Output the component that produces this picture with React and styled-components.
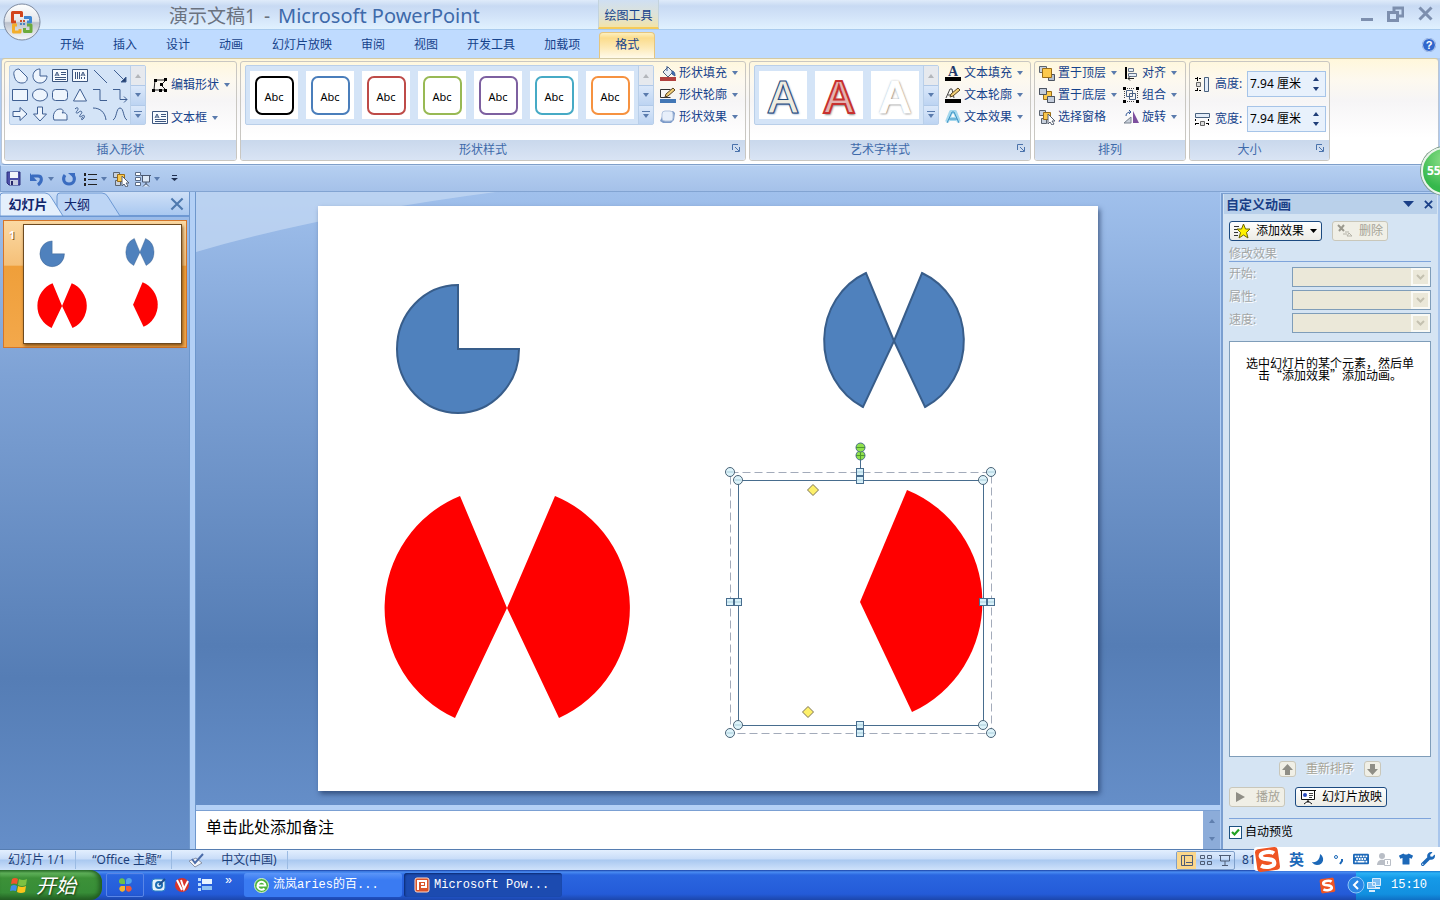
import React from "react"
import styled, { createGlobalStyle, css } from "styled-components"
import { FaMoon, FaTshirt, FaWrench, FaKeyboard } from "react-icons/fa"

const GlobalStyle = createGlobalStyle`
    * { box-sizing: border-box; }
    body {
        margin: 0;
        overflow: hidden;
        font-family: "Noto Sans", "Noto Sans CJK SC", sans-serif;
        font-size: 12px;
        line-height: 16px;
        color: #15428b;
    }
    button, input, select {
        font: inherit;
        color: inherit;
        margin: 0;
    }
    button {
        border: none;
        background: none;
        padding: 0;
        white-space: nowrap;
    }
    svg { display: block; flex-shrink: 0; }`

const Page = styled.div`
    position: relative;
    display: flex;
    flex-direction: column;
    height: 100vh;
    overflow: hidden;
    background: #b0ccf2;`

/* title bar */

const TitleBar = styled.header`
    display: flex;
    flex-shrink: 0;
    height: 30px;
    padding-left: 169px;
    border-bottom: 1px solid #a9cbee;
    background: linear-gradient(#dfebfa 0, #c8daf3 6px, #d2e3f8 16px, #e0f1ff 100%);`

const Orb = styled.button`
    position: absolute;
    left: 3px;
    top: 3px;
    z-index: 2;`

const Title = styled.h1`
    display: flex;
    gap: 8px;
    margin: 0;
    width: 429px;
    font-size: 19px;
    font-weight: 400;
    line-height: 32px;
    color: #6a727f;
    white-space: nowrap;`

const AppName = styled.span`
    font-size: 20px;
    color: #3e6aaa;`

const ContextHeader = styled.div`
    width: 61px;
    padding-top: 8px;
    text-align: center;
    border: solid #c3d3dd;
    border-width: 0 1px;
    border-bottom: 2px solid #f5cb5a;
    background: linear-gradient(#cfdff3, #dfe3d4 60%, #f3e3a8);`

const WindowButtons = styled.div`
    display: flex;
    align-items: center;
    gap: 14px;
    margin-left: auto;
    padding: 0 7px 2px 0;`

/* tab strip */

const TabStrip = styled.nav`
    display: flex;
    flex-shrink: 0;
    height: 28px;
    padding: 2px 4px 0 46px;
    gap: 1px;
    background: #bfdbff;`

const Tab = styled.button`
    padding: 0 14px;
    ${({ $active }) => $active && css`
        margin-left: 4px;
        padding: 0 15px 2px;
        border: 1px solid #e5c57e;
        border-bottom: none;
        border-radius: 4px 4px 0 0;
        background: linear-gradient(#fdf0c0 0, #fbdc8c 5px, #fdeab8 60%, #fffaea);
    `}`

const HelpButton = styled.button`
    margin-left: auto;`

/* ribbon */

const Ribbon = styled.section`
    display: flex;
    flex-shrink: 0;
    gap: 3px;
    height: 107px;
    margin: 0 1px;
    padding: 2px 2px 3px;
    border: 1px solid #b9c5d5;
    border-top-color: #d3c9a4;
    border-bottom-color: #7f9fc9;
    border-radius: 4px;
    background: linear-gradient(#fff7db 0, #fdf9ef 20%, #f6f5f6 40%, #ffffff 75%);`

const Group = styled.section`
    position: relative;
    display: flex;
    flex-direction: column;
    width: ${({ $width }) => $width}px;
    border: 1px solid #c9c7c2;
    border-radius: 3px;
    overflow: hidden;`

const GroupBody = styled.div`
    flex: 1;
    display: flex;
    align-items: flex-start;
    gap: 6px;
    padding: 0 4px;`

const GroupLabel = styled.h2`
    margin: 0;
    height: 20px;
    padding: 2px ${({ $launcher }) => $launcher ? 20 : 0}px 0 0;
    font-size: 12px;
    font-weight: 400;
    text-align: center;
    color: #3e6aaa;
    background: linear-gradient(#c9d8ec, #d9e4f4);`

const Launcher = styled.button`
    position: absolute;
    right: 5px;
    bottom: 8px;`

const Gallery = styled.div`
    display: flex;
    margin-top: 3px;
    height: 60px;
    border: 1px solid #b9cfe9;
    border-radius: 2px;
    background: #d4e4f7;`

const ShapeGrid = styled.div`
    display: grid;
    grid-template-columns: repeat(6, 20px);
    grid-template-rows: repeat(3, 19px);`

const ShapeButton = styled.button`
    display: grid;
    place-items: center;`

const StyleCells = styled.div`
    display: flex;
    gap: 8px;
    padding: 5px 4px;`

const StyleCell = styled.button`
    display: grid;
    place-items: center;
    width: 48px;
    height: 48px;
    background: #fff;`

const AbcBox = styled.span`
    width: 39px;
    height: 39px;
    border: 2px solid ${({ $color }) => $color};
    border-radius: 7px;
    font-size: 11px;
    line-height: 38px;
    color: #000;`

const WordArt = styled.span`
    font-family: "Open Sans", sans-serif;
    font-weight: 600;
    font-size: 46px;
    line-height: 48px;
    color: ${({ $fill }) => $fill};
    -webkit-text-stroke: ${({ $weight }) => $weight}px ${({ $stroke }) => $stroke};
    text-shadow: ${({ $shadow }) => $shadow};`

const ScrollColumn = styled.div`
    display: grid;
    grid-template-rows: repeat(3, 1fr);
    width: 15px;
    border-left: 1px solid #b9cfe9;`

const ScrollButton = styled.button`
    display: grid;
    place-items: center;
    background: ${({ $off }) => $off ? "#e6e9ee" : "linear-gradient(#dbe8fa, #bdd4f2)"};
    & + & { border-top: 1px solid #b1c9e8; }`

const Column = styled.div`
    display: flex;
    flex-direction: column;
    align-items: flex-start;
    gap: ${({ $gap }) => $gap || 0}px;
    padding-top: ${({ $top }) => $top || 0}px;`

const RibbonButton = styled.button`
    display: flex;
    align-items: center;
    gap: 3px;
    height: 22px;`

const ArrowWrap = styled.span`
    padding-left: 2px;`

const SizeRow = styled.div`
    display: flex;
    align-items: center;
    gap: 5px;
    height: 26px;`

const SizeLabel = styled.label`
    width: 27px;
    white-space: nowrap;`

const SpinBox = styled.div`
    display: flex;
    width: 79px;
    height: 26px;
    border: 1px solid #a6c4e8;
    background: #e8f1fc;`

const SpinInput = styled.input`
    flex: 1;
    min-width: 0;
    padding: 0 2px;
    border: none;
    background: transparent;
    color: #000;`

const SpinArrows = styled.div`
    display: flex;
    flex-direction: column;
    justify-content: space-evenly;
    width: 12px;`

/* quick access bar */

const QuickBar = styled.div`
    display: flex;
    flex-shrink: 0;
    align-items: center;
    height: 27px;
    padding-left: 5px;
    gap: 4px;
    border: 1px solid #82a4d2;
    border-top-color: #c7dcf7;
    background: linear-gradient(#b5cff1, #a5c1e9);`

const QuickButton = styled.button`
    display: flex;
    align-items: center;
    gap: 3px;
    margin-right: ${({ $after }) => $after || 0}px;`

/* work area */

const Workspace = styled.main`
    flex: 1;
    display: flex;
    min-height: 0;
    background: #b3d0f6;`

const backdrop = css`
    background: linear-gradient(#a0c0ec 0, #7ea2d5 28%, #557db5 74%, #658ec8 100%);`

const SlidePane = styled.aside`
    display: flex;
    flex-direction: column;
    width: 190px;
    flex-shrink: 0;
    border-right: 1px solid #6e97cc;
    ${backdrop}`

const PaneTabs = styled.div`
    position: relative;
    display: flex;
    height: 25px;
    border-bottom: 2px solid #6d98d3;
    background: linear-gradient(#cfe0f7, #a9c8f0);`

const PaneTabArt = styled.svg`
    position: absolute;
    left: 0;
    top: 0;`

const PaneTab = styled.button`
    position: relative;
    width: 56px;
    font-size: 13px;
    font-weight: ${({ $active }) => $active ? 700 : 400};
    text-align: center;
    color: #10246b;
    & + & { width: 42px; }`

const PaneClose = styled.button`
    margin-left: auto;
    padding-right: 5px;`

const Thumb = styled.button`
    display: flex;
    align-items: flex-start;
    margin: 3px 2px 0 3px;
    padding: 3px 4px 3px 3px;
    gap: 6px;
    border: 1px solid #d5762a;
    background: linear-gradient(#fbd9a3 0, #f5c078 35%, #ef9f3a 36%, #f3a84b 100%);`

const ThumbNumber = styled.span`
    width: 10px;
    padding-top: 4px;
    font-size: 11px;
    font-weight: 700;
    line-height: 13px;
    color: #fff;
    text-shadow: 1px 1px #8a5a20;`

const ThumbSlide = styled.span`
    flex: 1;
    border: 1px solid #6d4a20;
    background: #fff;
    box-shadow: 1px 2px 3px rgba(90, 45, 0, 0.7);
    svg { width: 100%; height: auto; }`

const Center = styled.div`
    flex: 1;
    display: flex;
    flex-direction: column;
    min-width: 0;
    margin-left: 5px;
    border-left: 1px solid #6e97cc;`

const Stage = styled.div`
    position: relative;
    flex: 1;
    min-height: 0;
    display: flex;
    justify-content: center;
    align-items: flex-start;
    padding: 14px 20px;
    ${backdrop}`

const Swoosh = styled.svg`
    position: absolute;
    left: 0;
    top: 0;`

const Slide = styled.div`
    position: relative;
    height: 100%;
    aspect-ratio: 4 / 3;
    background: #fff;
    box-shadow: 2px 3px 5px rgba(20, 40, 80, 0.6);
    svg { width: 100%; height: 100%; }`

const Notes = styled.div`
    display: flex;
    height: 39px;
    flex-shrink: 0;
    margin-top: 5px;
    border-top: 1px solid #7ba0d3;`

const NotesInput = styled.input`
    flex: 1;
    min-width: 0;
    border: none;
    padding: 0 10px 6px;
    background: #fff;
    font-size: 16px;
    color: #000;
    &::placeholder { color: #000; opacity: 1; }`

const NotesScroll = styled.div`
    display: flex;
    flex-direction: column;
    justify-content: space-between;
    align-items: center;
    width: 18px;
    padding: 8px 0;
    border-left: 1px solid #fff;
    background: #8cacd9;`

/* custom animation pane */

const TaskPane = styled.aside`
    display: flex;
    flex-direction: column;
    width: 219px;
    flex-shrink: 0;
    margin: 1px 0 0 1px;
    border-left: 2px solid #7b9fd0;
    border-right: 2px solid #a9c6ec;
    border-top: 1px solid #7b9fd0;
    background: #d5e4f3;
    color: #000;`

const TaskHeader = styled.header`
    display: flex;
    align-items: center;
    height: 20px;
    margin: 0 1px;
    gap: 10px;
    padding: 0 4px 0 2px;
    background: #b9d0ea;
    color: #1a3f87;
    h2 {
        flex: 1;
        margin: 0;
        font-size: 13px;
        font-weight: 700;
    }`

const TaskBody = styled.div`
    flex: 1;
    display: flex;
    flex-direction: column;
    padding: 7px 7px 0 6px;`

const TaskRow = styled.div`
    display: flex;
    align-items: center;
    justify-content: ${({ $center }) => $center ? "center" : "flex-start"};
    gap: 10px;
    margin-top: ${({ $top }) => $top || 0}px;`

const TaskButton = styled.button`
    display: flex;
    align-items: center;
    justify-content: center;
    gap: 6px;
    height: 20px;
    padding: 0 4px;
    border: 1px solid #1c4a80;
    border-radius: 3px;
    background: linear-gradient(#fff, #ecebe5);
    color: #000;
    &:disabled {
        border-color: #c9c7ba;
        background: #f0efe6;
        color: #a5a397;
    }`

const SmallButton = styled(TaskButton)`
    width: 17px;
    height: 16px;
    padding: 0;`

const SectionTitle = styled.h3`
    margin: 6px 0 5px;
    height: 15px;
    border-bottom: 1px solid #7ea4db;
    font-size: 12px;
    font-weight: 400;
    line-height: 14px;
    color: #a3a6a6;
    text-shadow: 1px 1px #fff;`

const Field = styled.div`
    display: flex;
    justify-content: space-between;
    height: 23px;
    label {
        line-height: 14px;
        color: #a3a6a6;
        text-shadow: 1px 1px #fff;
    }`

const SelectBox = styled.div`
    display: flex;
    position: relative;
    width: 139px;
    height: 20px;
    select {
        flex: 1;
        appearance: none;
        border: 1px solid #7f9db9;
        border-radius: 0;
        background: #ebe8d9;
        opacity: 1;
    }`

const SelectArrow = styled.span`
    position: absolute;
    right: 1px;
    top: 1px;
    bottom: 1px;
    width: 19px;
    display: grid;
    place-items: center;
    border: 2px solid #fafaf5;
    background: #ebe8d9;
    pointer-events: none;`

const EffectList = styled.div`
    flex: 1;
    margin-top: 5px;
    padding: 15px 12px;
    border: 1px solid #7f9db9;
    background: #fff;
    font-family: "Noto Sans CJK SC", sans-serif;
    line-height: 12px;
    text-align: center;`

const Muted = styled.span`
    color: #a5a397;
    text-shadow: 1px 1px #fff;`

const Preview = styled.div`
    display: flex;
    align-items: center;
    gap: 3px;
    margin-top: 11px;
    height: 31px;
    padding-bottom: 4px;
    border-top: 1px solid #7ea4db;
    input {
        appearance: none;
        width: 13px;
        height: 13px;
        border: 1px solid #1c5180;
        background: #fff;
    }
    input:checked {
        background: #fff url("data:image/svg+xml,%3Csvg xmlns='http://www.w3.org/2000/svg' viewBox='0 0 11 11'%3E%3Cpath d='M2 5l2.500 2.500L9 2.500' fill='none' stroke='%2321a121' stroke-width='2.200'/%3E%3C/svg%3E");
    }`

/* status bar and taskbar */

const StatusBar = styled.footer`
    display: flex;
    flex-shrink: 0;
    align-items: center;
    height: 21px;
    padding-left: 8px;
    border-top: 1px solid #567db1;
    background: linear-gradient(#e3effe 0, #c8dcf8 45%, #a9c8f0 50%, #cfe2fb 100%);
    color: #1b3d78;`

const StatusItem = styled.span`
    display: flex;
    align-items: center;
    gap: 17px;
    height: 18px;
    margin-right: ${({ $after }) => $after || 16}px;
    padding-right: 10px;
    border-right: 1px solid #9bbbe3;
    white-space: nowrap;`

const ViewButtons = styled.div`
    display: flex;
    margin-left: auto;
    margin-right: 7px;
    border: 1px solid #7f9fca;
    border-radius: 2px;
    button {
        display: grid;
        place-items: center;
        width: 19px;
        height: 17px;
    }
    button:first-child { background: #fbd78b; }`

const Zoom = styled.span`
    width: 198px;`

const ImeBar = styled.div`
    position: absolute;
    right: 0;
    bottom: 29px;
    display: flex;
    align-items: center;
    gap: 8px;
    height: 24px;
    padding-right: 5px;
    border-radius: 3px 0 0 3px;
    background: #fff;
    color: #1c68b8;
    b { font-size: 15px; }`

const Taskbar = styled.footer`
    display: flex;
    flex-shrink: 0;
    align-items: center;
    height: 30px;
    background: linear-gradient(#1941a5 0, #4a8df2 2px, #2a66e0 5px, #245bd8 80%, #1c46ac 100%);
    color: #fff;
    font-family: "Liberation Mono", "Noto Sans CJK SC", monospace;`

const StartButton = styled.button`
    display: flex;
    align-items: center;
    gap: 7px;
    width: 102px;
    height: 30px;
    padding-left: 9px;
    border-radius: 0 12px 12px 0;
    background: linear-gradient(#2f7a2f 0, #62b35c 3px, #3c9138 8px, #378d37 75%, #245f24 100%);
    box-shadow: inset -3px 0 4px #225c22;
    font-family: "Noto Sans CJK SC", sans-serif;
    font-size: 20px;
    font-style: italic;
    line-height: 26px;
    text-shadow: 1px 1px 2px #16380f;`

const Launch = styled.div`
    display: flex;
    align-items: center;
    gap: 7px;
    width: 142px;
    padding-left: 4px;`

const LaunchMain = styled.button`
    display: grid;
    place-items: center;
    width: 38px;
    height: 24px;
    border: 1px solid #5a86e6;
    border-radius: 2px;`

const More = styled.span`
    padding: 0 0 8px 5px;`

const TaskItem = styled.button`
    display: flex;
    align-items: center;
    gap: 4px;
    width: 158px;
    height: 24px;
    margin-right: 2px;
    padding-left: 10px;
    border-radius: 3px;
    background: ${({ $active }) => $active ? "#1c4bb0" : "linear-gradient(#5c96f8, #3a7bf2 30%)"};
    box-shadow: ${({ $active }) => $active ? "inset 1px 1px 2px #0b2a72" : "none"};`

const Tray = styled.div`
    display: flex;
    align-items: center;
    height: 30px;
    margin-left: auto;`

const TrayInner = styled.div`
    display: flex;
    align-items: center;
    height: 30px;
    gap: 1px;
    margin-left: 20px;
    padding-right: 13px;
    background: linear-gradient(#0c59b9 0, #2bb2f6 3px, #159ae8 8px, #1290e0 80%, #0f6fc4 100%);
    span { margin-left: 8px; }
    svg:first-child { margin-left: -9px; }`

const SpeedBall = styled.div`
    position: absolute;
    right: -29px;
    top: 147px;
    width: 48px;
    height: 48px;
    padding-left: 4px;
    border: 2px solid #e9f5ea;
    border-radius: 50%;
    background: radial-gradient(circle at 50% 25%, #8fe08a, #35b84c 70%);
    box-shadow: 0 0 0 1px #7b9a86;
    color: #fff;
    font-weight: 700;
    line-height: 44px;`

const Ico = ({ w = 16, h = w, box, children, ...rest }) =>
    <svg width={w} height={h} viewBox={box || `0 0 ${w} ${h}`} fill="none" aria-hidden="true" {...rest}>{children}</svg>

const Down = ({ color = "#5a7bad" }) => <Ico w={6} h={4}><path d="M0 0h6L3 4z" fill={color} /></Ico>
const Up = ({ color = "#5a7bad" }) => <Ico w={6} h={4}><path d="M0 4h6L3 0z" fill={color} /></Ico>

const Cross = ({ size = 10, color = "#4e79ae", weight = 2 }) =>
    <Ico w={size} box="0 0 10 10"><path d="M1 1l8 8M9 1L1 9" stroke={color} strokeWidth={weight} /></Ico>

const OrbIcon = () =>
    <Ico w={38} h={38}>
        <defs>
            <linearGradient id="orb" x2="0" y2="1">
                <stop stopColor="#fff" /><stop offset=".48" stopColor="#e2e5ea" />
                <stop offset=".52" stopColor="#bcc2cc" /><stop offset="1" stopColor="#f8fafc" />
            </linearGradient>
        </defs>
        <circle cx="19" cy="19" r="18" fill="url(#orb)" stroke="#7d8aa0" />
        <g strokeWidth="3" strokeLinejoin="round">
            <path d="M13 19H9.500V9.500h9V14" stroke="#d2451c" />
            <path d="M21 14.500h6.500V19H24" stroke="#3f86d2" />
            <path d="M14 22h-3.500v7H17v-3" stroke="#f3ae2c" />
            <path d="M24 22h4v6.500h-6.500V25" stroke="#6cab3c" />
        </g>
        <path d="M17 17h2v2h-2zM20 17h2v2h-2z" fill="#c8502c" />
        <path d="M17 20h2v2h-2zM20 20h2v2h-2z" fill="#4a84c0" />
    </Ico>

const TextBoxIcon = ({ vertical }) =>
    <Ico w={16} h={14}>
        <path d="M.5.5h15v12H.5z" fill="#f7fbff" stroke="#3c567f" />
        {vertical
            ? <path d="M3.500 3v7M5.500 3v7M7.500 3v7M9.500 8v2M12.500 8v2M9 7l2-4 2 4M10 6h2" stroke="#3c567f" />
            : <path d="M9 3.500h5M9 5.500h5M3 8.500h11M3 10.500h11M3 7l2-4 2 4M4 6h2" stroke="#3c567f" />}
    </Ico>

// the eighteen entries of the shape gallery, row by row
const shapes = [
    <path d="M2 7C1 3 4 1 7 1l8 8c1 3-1 6-5 6C5 15 3 12 2 7z" />,
    <path d="M8 1v7h7c0 4-3 7-7 7s-7-3-7-7 3-7 7-7z" />,
    "text",
    "vertical",
    <path d="M2 2l13 13" />,
    <g><path d="M2 2l12 12" /><path d="M14 9v5H9z" fill="#26406e" /></g>,
    <path d="M.5 2.500h15v11H.5z" />,
    <ellipse cx="8" cy="8" rx="7.500" ry="6" />,
    <rect x=".5" y="2.500" width="15" height="11" rx="3" />,
    <path d="M8 2l6.500 12h-13z" />,
    <path d="M1 2.500h7v11h7" fill="none" />,
    <g fill="none"><path d="M1 2.500h7v10h7" /><path d="M12 9.500l3 3-3 3" /></g>,
    <path d="M1 5.500h7v-4l7 6.500-7 6.500v-4H1z" />,
    <path d="M5.500 1v7h-4L8 15l6.500-7h-4V1z" />,
    <path d="M2 14C0 9 3 3 8 3c3 0 4 2 2 4 3-1 5 1 5 3v4z" />,
    <path d="M3 3c3-3 4 0 2 2s0 3 2 1 4 0 2 2-2 4 1 2 3 1 1 3-2-1 0-2" fill="none" />,
    <path d="M1 2c7 0 12 4 13 12" fill="none" />,
    <path d="M1 14C5 12 4 2 8 2s3 10 7 12" fill="none" />,
]

const ShapeGlyph = ({ shape }) => {
    if (typeof shape === "string") { return <TextBoxIcon vertical={shape === "vertical"} /> }
    return <Ico><g fill="#eef5fd" stroke="#3f5f92">{shape}</g></Ico>
}

const Arrange = ({ front }) =>
    <Ico>
        <path d="M.5 1.500h7v6h-7z" fill="#c7d0dc" stroke="#5b6470" />
        <path d="M9.500 9.500h6v6h-6z" fill="#b3bfd0" stroke="#4b5360" />
        {front
            ? <path d="M3.500 3.500h9v9h-9z" fill="#fbc94d" stroke="#9a6d17" />
            : <><path d="M4.500 4.500h8v8h-8z" fill="#fbc94d" stroke="#9a6d17" />
                <path d="M.5 1.500h7v6h-7zM8.500 9.500h7v6h-7z" fill="#c3ccda" stroke="#4b5360" /></>}
    </Ico>

const SelectPaneIcon = () =>
    <Ico>
        <path d="M.5 1.500h6v5h-6zM2.500 9.500h5v5h-5z" fill="#c7d0dc" stroke="#5b6470" />
        <path d="M4.500 3.500h7v7h-7z" fill="#fbc94d" stroke="#9a6d17" />
        <path d="M9 5v10l2-2 2 3 2-1-2-3h3z" fill="#fff" stroke="#555f70" />
    </Ico>

const icons = {
    editShape: <Ico>
        <path d="M3 3h11L9 8l5 5H2z" stroke="#222" />
        <path d="M2 2h3v3H2zM12 1h3v3h-3zM8 6h3v3H8zM0 12h3v3H0zM12 12h3v3h-3zM7 12h3v3H7z" fill="#000" />
    </Ico>,
    textBox: <TextBoxIcon />,
    fill: <Ico>
        <path d="M3 7l5-5 5 5-5 5z" fill="#e9eff6" stroke="#4f6179" />
        <path d="M7 6V1M12 6c2 0 3 2 3 5l-3-2z" stroke="#3d5f97" fill="#3d70b5" />
        <path d="M0 12h16v4H0z" fill="#b2413e" />
    </Ico>,
    outline: <Ico>
        <path d="M.5 2.500h10M.5 2.500v8h10" stroke="#333" />
        <path d="M5 10l1-3 7-6 2 2-7 6z" fill="#f2cf77" stroke="#5b4522" />
        <path d="M0 12h16v4H0z" fill="#4277b6" />
    </Ico>,
    effect: <Ico>
        <path d="M3 5l3-3h7l2 2-1 7-3 3H3l-3-2z" fill="#7d9bc9" />
        <rect x="2" y="2" width="11" height="10" rx="3" fill="#e7effa" stroke="#b3c5df" />
    </Ico>,
    textFill: <Ico>
        <text x="3" y="11" fontSize="14" fontWeight="700" fontFamily="Liberation Serif, serif" fill="#22386b">A</text>
        <path d="M0 12h16v4H0z" fill="#000" />
    </Ico>,
    textOutline: <Ico>
        <path d="M1 11L5 2h2l2 9M3 8h5" stroke="#444" />
        <path d="M5 10l1-3 7-6 2 2-7 6z" fill="#f2cf77" stroke="#5b4522" />
        <path d="M0 12h16v4H0z" fill="#000" />
    </Ico>,
    textEffect: <Ico>
        <path d="M2 13L6 3h4l4 10M5 10h6" stroke="#a5d8ee" strokeWidth="4" strokeLinejoin="round" />
        <path d="M2 14L7 3h2l5 11M4 10h8" stroke="#3c93c4" />
    </Ico>,
    front: <Arrange front />,
    back: <Arrange />,
    selectPane: <SelectPaneIcon />,
    align: <Ico>
        <path d="M3 2v12" stroke="#000" strokeWidth="2" />
        <path d="M5.500 3.500h5v3h-5zM5.500 8.500h8v3h-8z" fill="#e6edf6" stroke="#66758c" />
        <path d="M5 13.500h6M7 11.500l-2 2 2 2" stroke="#222" />
    </Ico>,
    group: <Ico>
        <path d="M4 1.500h8M4 14.500h8M1.500 4v8M14.500 4v8" stroke="#444" strokeDasharray="1 1" />
        <path d="M3.500 3.500h6v6h-6zM6.500 6.500h6v6h-6z" stroke="#4b6286" />
        <path d="M0 0h3v3H0zM13 0h3v3h-3zM0 13h3v3H0zM13 13h3v3h-3z" fill="#000" />
    </Ico>,
    rotate: <Ico>
        <path d="M8 8v6H1z" fill="#c9d1dc" stroke="#78828f" />
        <path d="M10 2l6 12h-6z" fill="#7d4f9e" />
        <path d="M3 7c0-3 2-4 5-4M6 1l2 2-2 2" stroke="#2f5696" />
    </Ico>,
    height: <Ico>
        <path d="M10.500 1.500h4v14h-4z" fill="#e3ecf8" stroke="#49617f" />
        <path d="M2.500 6.500h4v4h-4z" stroke="#666" fill="#ddd" />
        <path d="M1 2.500h8M1 14.500h8" stroke="#000" strokeDasharray="2 2" />
        <path d="M3.500 1v4M3.500 12v3" stroke="#000" />
    </Ico>,
    width: <Ico>
        <path d="M1.500 2.500h14v4h-14z" fill="#e3ecf8" stroke="#49617f" />
        <path d="M6.500 10.500h4v4h-4z" stroke="#666" fill="#ddd" />
        <path d="M1.500 8v7M14.500 8v7" stroke="#000" strokeDasharray="2 2" />
        <path d="M1 12.500h4M12 12.500h3" stroke="#000" />
    </Ico>,
}

const accents = ["#000000", "#4a7ebb", "#be4b48", "#98b954", "#7d60a0", "#46aac5", "#f69240"]

const wordArts = [
    { $fill: "#eeece1", $stroke: "#1f497d", $weight: 1, $shadow: "1px 1px 2px #5f83b4" },
    { $fill: "#e3b3b1", $stroke: "#c8312f", $weight: 2, $shadow: "1px 2px 2px #888" },
    { $fill: "#ffffff", $stroke: "#ffffff", $weight: 1, $shadow: "0 0 2px #777, 1px 1px 2px #888" },
]

const GalleryScroll = () =>
    <ScrollColumn>
        <ScrollButton $off aria-label="上一行"><Up color="#b3b6bb" /></ScrollButton>
        <ScrollButton aria-label="下一行"><Down /></ScrollButton>
        <ScrollButton aria-label="其他">
            <Ico w={8} h={8}><path d="M0 .5h8" stroke="#5a7bad" /><path d="M1 3h6L4 7z" fill="#5a7bad" /></Ico>
        </ScrollButton>
    </ScrollColumn>

const Command = ({ icon, label, plain }) =>
    <RibbonButton>
        {icons[icon]}{label}
        {!plain && <ArrowWrap><Down /></ArrowWrap>}
    </RibbonButton>

const RibbonGroup = ({ label, width, launcher, children }) =>
    <Group $width={width}>
        <GroupBody>{children}</GroupBody>
        <GroupLabel $launcher={launcher}>{label}</GroupLabel>
        {launcher && <Launcher aria-label={label}>
            <Ico w={8} h={8}><path d="M.5 6V.5H6M3 3l4 4M7.500 3v4.500H3" stroke="#4a72ab" /></Ico>
        </Launcher>}
    </Group>

const SizeField = ({ id, icon, label }) =>
    <SizeRow>
        {icons[icon]}
        <SizeLabel htmlFor={id}>{label}:</SizeLabel>
        <SpinBox>
            <SpinInput id={id} defaultValue="7.94 厘米" />
            <SpinArrows>
                <button aria-label="增大"><Up color="#1f3d78" /></button>
                <button aria-label="减小"><Down color="#1f3d78" /></button>
            </SpinArrows>
        </SpinBox>
    </SizeRow>

const FormatRibbon = () =>
    <Ribbon>
        <RibbonGroup label="插入形状" width={233}>
            <Gallery>
                <ShapeGrid>{shapes.map((shape, i) =>
                    <ShapeButton key={i}><ShapeGlyph shape={shape} /></ShapeButton>
                )}</ShapeGrid>
                <GalleryScroll />
            </Gallery>
            <Column $top={12} $gap={11}>
                <Command icon="editShape" label="编辑形状" />
                <Command icon="textBox" label="文本框" />
            </Column>
        </RibbonGroup>
        <RibbonGroup label="形状样式" width={506} launcher>
            <Gallery>
                <StyleCells>{accents.map((color) =>
                    <StyleCell key={color}><AbcBox $color={color}>Abc</AbcBox></StyleCell>
                )}</StyleCells>
                <GalleryScroll />
            </Gallery>
            <Column>
                <Command icon="fill" label="形状填充" />
                <Command icon="outline" label="形状轮廓" />
                <Command icon="effect" label="形状效果" />
            </Column>
        </RibbonGroup>
        <RibbonGroup label="艺术字样式" width={282} launcher>
            <Gallery>
                <StyleCells>{wordArts.map((art) =>
                    <StyleCell key={art.$fill}><WordArt {...art}>A</WordArt></StyleCell>
                )}</StyleCells>
                <GalleryScroll />
            </Gallery>
            <Column>
                <Command icon="textFill" label="文本填充" />
                <Command icon="textOutline" label="文本轮廓" />
                <Command icon="textEffect" label="文本效果" />
            </Column>
        </RibbonGroup>
        <RibbonGroup label="排列" width={152}>
            <Column>
                <Command icon="front" label="置于顶层" />
                <Command icon="back" label="置于底层" />
                <Command icon="selectPane" label="选择窗格" plain />
            </Column>
            <Column>
                <Command icon="align" label="对齐" />
                <Command icon="group" label="组合" />
                <Command icon="rotate" label="旋转" />
            </Column>
        </RibbonGroup>
        <RibbonGroup label="大小" width={141} launcher>
            <Column $top={9} $gap={9}>
                <SizeField id="shape-height" icon="height" label="高度" />
                <SizeField id="shape-width" icon="width" label="宽度" />
            </Column>
        </RibbonGroup>
    </Ribbon>

const QuickAccess = () =>
    <QuickBar>
        <QuickButton aria-label="保存" $after={4}>
            <Ico w={15} h={15}>
                <path d="M1 1h13v13H3l-2-2z" fill="#4b4fa8" stroke="#2d2f7c" />
                <path d="M4 1h8v6H4z" fill="#f2f4fb" /><path d="M4 9h8v5H4z" fill="#c5cbe0" /><path d="M5 10h2v4H5z" fill="#26286b" />
            </Ico>
        </QuickButton>
        <QuickButton aria-label="撤消" $after={3}>
            <Ico><path d="M3 5h6c4 0 5 5 0 9" stroke="#3a6cc0" strokeWidth="3" /><path d="M1 2v8h7z" fill="#3a6cc0" /></Ico>
            <Down />
        </QuickButton>
        <QuickButton aria-label="恢复" $after={2}>
            <Ico><path d="M4 4c-3 4-1 9 4 9s7-5 4-9" stroke="#3a6cc0" strokeWidth="3" /><path d="M7 2h7v6z" fill="#3a6cc0" /></Ico>
        </QuickButton>
        <QuickButton aria-label="项目符号" $after={2}>
            <Ico w={15} h={14}><path d="M5 2.500h9M5 7.500h9M5 12.500h9" stroke="#222" /><path d="M1 1h2v3H1zM1 6h2v3H1zM1 11h2v3H1z" fill="#222" /></Ico>
            <Down />
        </QuickButton>
        <QuickButton aria-label="选择窗格" $after={2}><SelectPaneIcon /></QuickButton>
        <QuickButton aria-label="幻灯片放映" $after={7}>
            <Ico>
                <path d="M.5 1.500h5v3h-5zM.5 6.500h5v3h-5zM.5 11.500h5v3h-5z" fill="#fff" stroke="#5a6b85" />
                <path d="M6 4.500h10M7.500 5v6h7V5M11 11v3M8 15.500l3-3 3 3" fill="#dce8f6" stroke="#4a5870" />
            </Ico>
            <Down />
        </QuickButton>
        <QuickButton aria-label="自定义">
            <Ico w={7} h={7}><path d="M1 .5h5" stroke="#1f2f50" /><path d="M0 3h7L3.500 6z" fill="#1f2f50" /></Ico>
        </QuickButton>
    </QuickBar>

const SlideShapes = () =>
    <g>
        <g fill="#4f81bd" stroke="#385d8a" strokeWidth="2">
            <path d="M201 143A61 64 0 1 1 140 79V143z" />
            <path d="M576 135L548 67A70 74 0 0 0 545 201z" />
            <path d="M576 135L604 67A70 74 0 0 1 607 201z" />
        </g>
        <g fill="#ff0000">
            <path d="M189 402L142 290A121 121 0 0 0 137 512z" />
            <path d="M189 402L237 290A121 121 0 0 1 241 512z" />
            <path d="M542 396L589 284A121 121 0 0 1 594 506z" />
        </g>
    </g>

const frames = [
    { x: 412, y: 266, size: 261 },
    { x: 420, y: 274, size: 245 },
]

const corners = frames.flatMap(({ x, y, size }) =>
    [[x, y], [x + size, y], [x, y + size], [x + size, y + size]])

const edges = frames.flatMap(({ x, y, size }) =>
    [[542, y], [542, y + size], [x, 396], [x + size, 396]])

const Selection = () =>
    <g fill="none" stroke="#486d8e">
        <rect x="412.500" y="266.500" width="261" height="261" strokeDasharray="8 4" stroke="#a3abba" />
        <rect x="420.500" y="274.500" width="245" height="245" />
        <path d="M542.500 250v16" />
        {edges.map(([x, y]) =>
            <g key={`${x}-${y}`}>
                <rect x={x - 3.5} y={y - 3.5} width="7" height="7" fill="#d8f1fa" />
                <path d={`M${x - 3} ${y}h6`} stroke="#a8cdda" />
            </g>
        )}
        {corners.map(([x, y]) =>
            <g key={`${x}-${y}`}>
                <circle cx={x} cy={y} r="4.500" fill="#ddf3fa" stroke="#4a6377" />
                <path d={`M${x - 3} ${y}h6`} stroke="#a8cdda" />
            </g>
        )}
        <circle cx="542.500" cy="249.500" r="4.500" fill="#8fe04c" />
        <circle cx="542.500" cy="241.500" r="4.500" fill="#8fe04c" />
        <path d="M538 241.500h9M538 249.500h9M542.500 246v8" stroke="#4f9a2e" />
        <g fill="#fdf06a" stroke="#7d7355">
            <path d="M495 278.500l5.500 5.500-5.500 5.500-5.500-5.500z" />
            <path d="M490 500.500l5.500 5.500-5.500 5.500-5.500-5.500z" />
        </g>
    </g>

const SlideList = () =>
    <SlidePane>
        <PaneTabs>
            <PaneTabArt width="125" height="24" aria-hidden="true">
                <path d="M57 24V4q0-3 3-3h42q4 0 6 4l12 19z" fill="#bdd5f5" stroke="#6d98d3" />
                <path d="M0 24V4q0-3 3-3h42q4 0 6 4l12 19z" fill="#e4effc" stroke="#6d98d3" />
            </PaneTabArt>
            <PaneTab $active>幻灯片</PaneTab>
            <PaneTab>大纲</PaneTab>
            <PaneClose aria-label="关闭"><Cross size={14} weight={1.5} /></PaneClose>
        </PaneTabs>
        <Thumb>
            <ThumbNumber>1</ThumbNumber>
            <ThumbSlide>
                <svg viewBox="0 0 780 585"><SlideShapes /></svg>
            </ThumbSlide>
        </Thumb>
    </SlidePane>

const EffectField = ({ id, label }) =>
    <Field>
        <label htmlFor={id}>{label}:</label>
        <SelectBox>
            <select id={id} disabled />
            <SelectArrow><Ico w={9} h={6}><path d="M1 1l3.500 3.500L8 1" stroke="#c4c1b0" strokeWidth="2" /></Ico></SelectArrow>
        </SelectBox>
    </Field>

const AnimationPane = () =>
    <TaskPane>
        <TaskHeader>
            <h2>自定义动画</h2>
            <button aria-label="菜单"><Ico w={11} h={6}><path d="M0 0h11L5.500 6z" fill="#1a3f87" /></Ico></button>
            <button aria-label="关闭"><Cross size={9} color="#1a3f87" /></button>
        </TaskHeader>
        <TaskBody>
            <TaskRow>
                <TaskButton>
                    <Ico>
                        <path d="M0 3.500h5M0 6.500h4M0 9.500h4M0 12.500h4" stroke="#333" />
                        <path d="M9.500 1l2 5H16l-3.500 3.500L14 15l-4.500-3L5 15l1.500-5.500L3 6h4.500z" fill="#fff200" stroke="#6b6400" />
                    </Ico>
                    添加效果
                    <Ico w={7} h={4}><path d="M0 0h7L3.500 4z" fill="#000" /></Ico>
                </TaskButton>
                <TaskButton disabled>
                    <Ico><path d="M1 2l6 6M7 2L2 8" stroke="#9b998e" strokeWidth="2" /><path d="M6 11h4M8 9h4M10 13l2-3 3 3z" stroke="#b5b3a8" /></Ico>
                    删除
                </TaskButton>
            </TaskRow>
            <SectionTitle>修改效果</SectionTitle>
            <EffectField id="effect-start" label="开始" />
            <EffectField id="effect-property" label="属性" />
            <EffectField id="effect-speed" label="速度" />
            <EffectList>选中幻灯片的某个元素，然后单击“添加效果”添加动画。</EffectList>
            <TaskRow $center $top={4}>
                <SmallButton disabled aria-label="上移"><Ico w={11}><path d="M5.500 0L11 6H8v5H3V6H0z" fill="#8f8e86" /></Ico></SmallButton>
                <Muted>重新排序</Muted>
                <SmallButton disabled aria-label="下移"><Ico w={11}><path d="M5.500 11L11 5H8V0H3v5H0z" fill="#8f8e86" /></Ico></SmallButton>
            </TaskRow>
            <TaskRow $top={10}>
                <TaskButton disabled>
                    <Ico><path d="M2 3l9 5-9 5z" fill="#8f8e86" /></Ico>
                    播放
                </TaskButton>
                <TaskButton>
                    <Ico>
                        <path d="M0 1.500h16M1.500 2v8.500h13V2M8 11v3M4 15l4-3 4 3" stroke="#111" fill="#fff" />
                        <circle cx="5" cy="6" r="2" fill="#2b4cc0" /><path d="M9 4.500h4M9 6.500h4M9 8.500h3" stroke="#444" />
                    </Ico>
                    幻灯片放映
                </TaskButton>
            </TaskRow>
            <Preview>
                <input type="checkbox" id="auto-preview" defaultChecked />
                <label htmlFor="auto-preview">自动预览</label>
            </Preview>
        </TaskBody>
    </TaskPane>

const SogouLogo = ({ size }) =>
    <Ico w={size} box="0 0 26 26">
        <g transform="rotate(-8 13 13)">
            <rect x="2" y="2" width="22" height="22" rx="3" fill="#ef5423" />
            <path d="M20 8C17 5 7 5 7 9c0 5 12 2 12 8 0 4-9 4-13 1" stroke="#fff" strokeWidth="4" />
        </g>
    </Ico>

const tabs = ["开始", "插入", "设计", "动画", "幻灯片放映", "审阅", "视图", "开发工具", "加载项", "格式"]

const App = () =>
    <Page>
        <GlobalStyle />
        <TitleBar>
            <Orb aria-label="Office"><OrbIcon /></Orb>
            <Title>
                <span>演示文稿1</span>
                <span>-</span>
                <AppName>Microsoft PowerPoint</AppName>
            </Title>
            <ContextHeader>绘图工具</ContextHeader>
            <WindowButtons>
                <button aria-label="最小化"><Ico w={12} h={16}><path d="M0 12h12v3H0z" fill="#7d8fae" /></Ico></button>
                <button aria-label="还原"><Ico w={17} h={16}>
                    <path d="M7 5V2h9v8h-4" stroke="#7d8fae" strokeWidth="3" />
                    <path d="M1.500 6.500h9v8h-9z" stroke="#7d8fae" strokeWidth="3" />
                </Ico></button>
                <button aria-label="关闭"><Cross size={15} color="#7d8fae" /></button>
            </WindowButtons>
        </TitleBar>
        <TabStrip>
            {tabs.map((name) => <Tab key={name} $active={name === "格式"}>{name}</Tab>)}
            <HelpButton aria-label="帮助">
                <Ico w={14}>
                    <circle cx="7" cy="7" r="6.500" fill="#2f66cc" stroke="#e8f1ff" />
                    <circle cx="7" cy="7" r="6.800" stroke="#5b82c8" strokeWidth=".5" />
                    <text x="7" y="11" fontSize="11" fontWeight="700" textAnchor="middle" fontFamily="Liberation Sans, sans-serif" fill="#fff">?</text>
                </Ico>
            </HelpButton>
        </TabStrip>
        <FormatRibbon />
        <QuickAccess />
        <Workspace>
            <SlideList />
            <Center>
                <Stage>
                    <Swoosh width="420" height="60" aria-hidden="true">
                        <path d="M0 60Q130 22 300 0H0z" fill="#c6daf4" opacity=".7" />
                    </Swoosh>
                    <Slide>
                        <svg viewBox="0 0 780 585"><SlideShapes /><Selection /></svg>
                    </Slide>
                </Stage>
                <Notes>
                    <NotesInput aria-label="备注" placeholder="单击此处添加备注" />
                    <NotesScroll><Up color="#5f7fae" /><Down color="#5f7fae" /></NotesScroll>
                </Notes>
            </Center>
            <AnimationPane />
        </Workspace>
        <StatusBar>
            <StatusItem>幻灯片 1/1</StatusItem>
            <StatusItem>“Office 主题”</StatusItem>
            <StatusItem>
                <Ico><path d="M1 9l7-3 6 5-7 4z" fill="#f4f6fa" stroke="#8893a8" /><path d="M4 7l3 4 8-9" stroke="#4a6ba8" strokeWidth="2" /></Ico>
                中文(中国)
            </StatusItem>
            <ViewButtons>
                <button aria-label="普通视图"><Ico w={12} h={11}><path d="M.5.500h11v10H.5zM3.500 1v9M5 7.500h6" stroke="#4e5c75" /></Ico></button>
                <button aria-label="幻灯片浏览"><Ico w={12} h={10}><path d="M.5.500h4v3h-4zM7.500.500h4v3h-4zM.5 6.500h4v3h-4zM7.500 6.500h4v3h-4z" stroke="#4e5c75" /></Ico></button>
                <button aria-label="放映"><Ico w={12} h={11}><path d="M0 .5h12M1.500 1v5h9V1M6 6v4M3 10.500h6" stroke="#4e5c75" /></Ico></button>
            </ViewButtons>
            <Zoom>81</Zoom>
        </StatusBar>
        <Taskbar>
            <StartButton>
                <Ico w={20} h={20}>
                    <path d="M3 4q3-2 6 0L8 9q-3-1-6 0z" fill="#f0552b" />
                    <path d="M10 4q4 2 8 0l-1 6q-4 2-8 0z" fill="#7cc242" />
                    <path d="M2 11q3-2 6 0l-1 5q-3-1-6 0z" fill="#3f8de8" />
                    <path d="M9 11q4 2 8 0l-1 6q-4 2-8 0z" fill="#fbc51b" />
                </Ico>
                开始
            </StartButton>
            <Launch>
                <LaunchMain aria-label="浏览器">
                    <Ico>
                        <path d="M8 7H4a3 3 0 1 1 4-3z" fill="#6cc04a" /><path d="M9 7V3a3 3 0 1 1 3 4z" fill="#4fa3ea" />
                        <path d="M8 9v4a3 3 0 1 1-4-4z" fill="#f5b32f" /><path d="M9 9h4a3 3 0 1 1-4 4z" fill="#ee5a3b" />
                    </Ico>
                </LaunchMain>
                <button aria-label="Outlook"><Ico><rect x="1" y="2" width="13" height="12" rx="3" fill="#e6f1fb" stroke="#2d86c6" /><circle cx="8" cy="8" r="3" stroke="#1d6fb5" strokeWidth="2" /><path d="M8 8l6-6" stroke="#1d4f8e" strokeWidth="2" /></Ico></button>
                <button aria-label="阅读"><Ico><circle cx="8" cy="8" r="7" fill="#d8342a" /><path d="M3 3l5 10M7 3l3 9 4-8" stroke="#fff" strokeWidth="2" /></Ico></button>
                <button aria-label="显示桌面"><Ico><path d="M1 1h3v3H1zM1 6h3v3H1zM1 11h3v3H1z" fill="#b9dcff" /><path d="M5 2h10v5H5z" fill="#e8f4ff" /><path d="M5 9h10v4H5z" fill="#8fc3f4" /></Ico></button>
                <More>»</More>
            </Launch>
            <TaskItem>
                <Ico w={15}><circle cx="7.500" cy="7.500" r="7" fill="#4db33d" stroke="#d8f5cf" /><path d="M3.500 7.500h8a4 4 0 1 0-1 3" stroke="#fff" strokeWidth="2" /></Ico>
                流岚aries的百...
            </TaskItem>
            <TaskItem $active>
                <Ico w={16}><rect x="1" y="1" width="14" height="14" rx="2" fill="#d9532b" stroke="#fbd7c8" /><path d="M4 13V4h8v6H7M7 7h3" stroke="#fff" strokeWidth="2" /></Ico>
                Microsoft Pow...
            </TaskItem>
            <Tray>
                <SogouLogo size={17} />
                <TrayInner>
                    <Ico w={18}><circle cx="9" cy="9" r="8" fill="#2a86e4" stroke="#8cc6f8" /><path d="M11 5L7 9l4 4" stroke="#fff" strokeWidth="2" /></Ico>
                    <Ico><path d="M6.500 1.500h8v7h-8zM1.500 5.500h8v6h-8z" fill="#7dbdf2" stroke="#d9ecfb" /><path d="M3 14h6M9 11h5" stroke="#d9ecfb" strokeWidth="2" /></Ico>
                    <span>15:10</span>
                </TrayInner>
            </Tray>
        </Taskbar>
        <ImeBar>
            <SogouLogo size={27} />
            <b>英</b>
            <Ico w={13}><path d="M8 1c5 3 4 11-3 11-2 0-4-1-5-3 5 1 8-3 8-8z" fill="#1c68b8" /></Ico>
            <Ico w={12} h={12}><circle cx="3" cy="4" r="1.500" stroke="#1c68b8" /><path d="M9 6v2l-2 3" stroke="#1c68b8" strokeWidth="2" /></Ico>
            <FaKeyboard size={16} />
            <Ico w={14}>
                <circle cx="5" cy="4" r="3" fill="#b9bec6" /><path d="M0 13c0-7 10-7 10 0z" fill="#b9bec6" />
                <path d="M7.500 7.500h6v6h-6zM10.500 9v3" fill="#fff" stroke="#b9bec6" />
            </Ico>
            <FaTshirt size={14} />
            <FaWrench size={14} />
        </ImeBar>
        <SpeedBall>55</SpeedBall>
    </Page>

export default App
